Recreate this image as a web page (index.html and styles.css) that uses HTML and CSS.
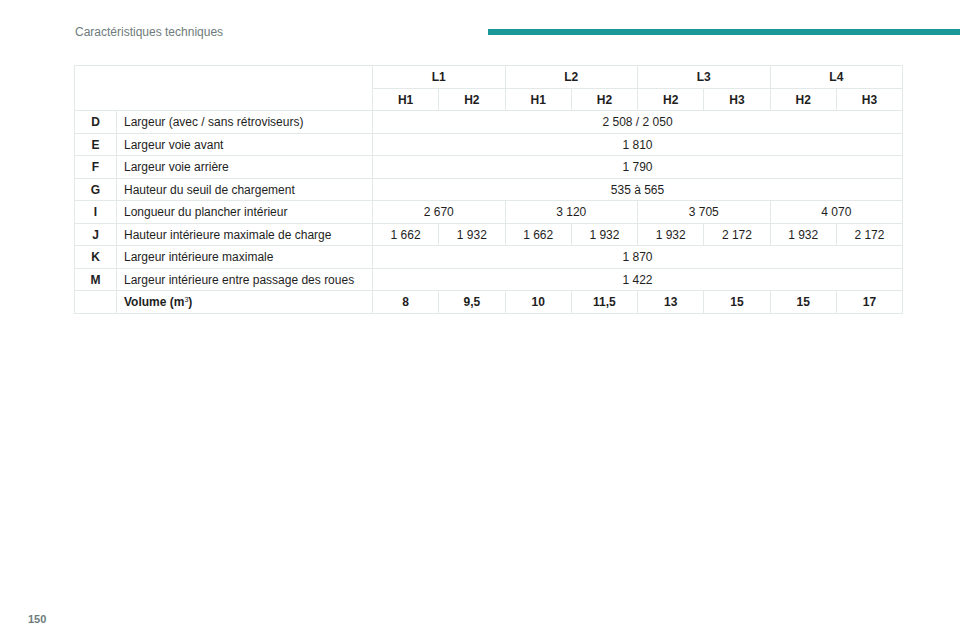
FILE: index.html
```html
<!DOCTYPE html>
<html lang="fr">
<head>
<meta charset="utf-8">
<link rel="stylesheet" href="styles.css">
</head>
<body>
<div class="page">
  <header class="top">
    <div class="title">Caractéristiques techniques</div>
    <div class="bar"></div>
  </header>
  <table class="spec">
    <colgroup>
      <col class="c-letter"><col class="c-label">
      <col class="c-num"><col class="c-num"><col class="c-num"><col class="c-num">
      <col class="c-num"><col class="c-num"><col class="c-num"><col class="c-num">
    </colgroup>
    <tr class="b">
      <td colspan="2" rowspan="2"></td>
      <td colspan="2">L1</td><td colspan="2">L2</td><td colspan="2">L3</td><td colspan="2">L4</td>
    </tr>
    <tr class="b">
      <td>H1</td><td>H2</td><td>H1</td><td>H2</td><td>H2</td><td>H3</td><td>H2</td><td>H3</td>
    </tr>
    <tr><td class="k">D</td><td class="l">Largeur (avec / sans rétroviseurs)</td><td colspan="8">2 508 / 2 050</td></tr>
    <tr><td class="k">E</td><td class="l">Largeur voie avant</td><td colspan="8">1 810</td></tr>
    <tr><td class="k">F</td><td class="l">Largeur voie arrière</td><td colspan="8">1 790</td></tr>
    <tr><td class="k">G</td><td class="l">Hauteur du seuil de chargement</td><td colspan="8">535 à 565</td></tr>
    <tr><td class="k">I</td><td class="l">Longueur du plancher intérieur</td><td colspan="2">2 670</td><td colspan="2">3 120</td><td colspan="2">3 705</td><td colspan="2">4 070</td></tr>
    <tr><td class="k">J</td><td class="l">Hauteur intérieure maximale de charge</td><td>1 662</td><td>1 932</td><td>1 662</td><td>1 932</td><td>1 932</td><td>2 172</td><td>1 932</td><td>2 172</td></tr>
    <tr><td class="k">K</td><td class="l">Largeur intérieure maximale</td><td colspan="8">1 870</td></tr>
    <tr><td class="k">M</td><td class="l">Largeur intérieure entre passage des roues</td><td colspan="8">1 422</td></tr>
    <tr class="b"><td></td><td class="l">Volume (m<sup>3</sup>)</td><td>8</td><td>9,5</td><td>10</td><td>11,5</td><td>13</td><td>15</td><td>15</td><td>17</td></tr>
  </table>
  <footer class="pnum">150</footer>
</div>
</body>
</html>
```
FILE: styles.css
```css
* { box-sizing: border-box; }
html, body { margin: 0; padding: 0; background: #fff; }
body { font-family: "Liberation Sans", Arial, sans-serif; color: #1e1e1e; }
.page { width: 960px; height: 640px; position: relative; }
.top { display: flex; align-items: center; height: 62px; }
.title {
  margin-left: 75px;
  font-size: 12px;
  color: #6e7b7b;
  width: 413px;
  padding-top: 1px;
}
.bar { flex: 1; height: 6px; background: #1a9898; margin-top: 1px; }
.spec {
  margin-left: 74px;
  margin-top: 3px;
  border-collapse: collapse;
  width: 828px;
  table-layout: fixed;
  font-size: 12px;
}
.c-letter { width: 42px; }
.c-label { width: 256px; }
.c-num { width: 66.25px; }
.spec td {
  border: 1.5px solid #e3e8e8;
  height: 22.5px;
  padding: 1px 0 0;
  text-align: center;
  vertical-align: middle;
  white-space: nowrap;
  line-height: 14px;
}
.spec td.l { text-align: left; padding-left: 7px; }
.spec td.k { font-weight: bold; }
.spec tr.b td { font-weight: bold; }
.spec sup { font-size: 7px; font-weight: normal; vertical-align: 4px; line-height: 0; }
.pnum {
  position: absolute;
  left: 28px;
  top: 613px;
  font-size: 11px;
  font-weight: bold;
  color: #6e7b7b;
}
```
